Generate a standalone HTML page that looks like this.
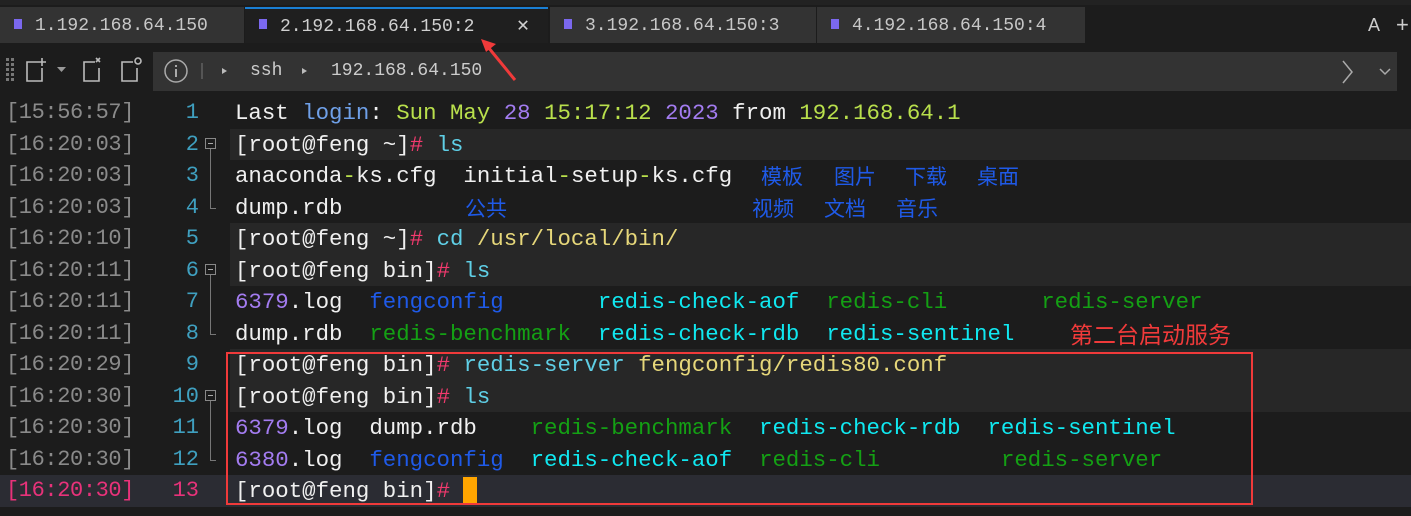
<!DOCTYPE html>
<html><head><meta charset="utf-8"><style>
*{margin:0;padding:0;box-sizing:border-box}
body{width:1411px;height:516px;background:#1c1c1c;overflow:hidden;position:relative;font-family:"Liberation Mono","Noto Sans CJK SC",monospace;}
.tab{position:absolute;top:7px;height:36px;background:#333;color:#c8c8c8;font-size:18px;line-height:39px;}
.tab .sq{position:absolute;left:14px;top:12px;width:8px;height:10px;background:#7b68ee}
.tab span.t{position:absolute;left:35px}
.row{position:absolute;left:0;width:1411px;height:31.5px}
.ts{position:absolute;left:6px;top:4px;color:#8a8a8a;font-size:22px;line-height:24px;letter-spacing:-0.4px}
.ln{position:absolute;right:1212px;top:4px;color:#3fa0c0;font-size:22px;line-height:24px}
.tx{position:absolute;left:235px;top:4px;color:#f0f0f0;font-size:22.4px;line-height:24px;white-space:pre}
.cj{position:absolute;top:4px;color:#1f5ae8;font-family:"Noto Sans CJK SC",sans-serif;font-size:21px;line-height:24px}
.W{color:#f0f0f0}.B{color:#6fa0e8}.Y{color:#b9e04c}.P{color:#a37cf0}.H{color:#f23a6e}.C{color:#5fcfe6}.Q{color:#e6d77a}.D{color:#1f5ae8}.G{color:#14a014}.K{color:#10e8f0}
.fold{position:absolute;left:205px;width:11px;height:11px;border:1px solid #888;}
.fold:after{content:"";position:absolute;left:2px;top:4px;width:5px;height:1px;background:#aaa}
.vl{position:absolute;left:210px;width:1px;background:#777}
.hl{position:absolute;left:210px;width:6px;height:1px;background:#777}
</style></head><body>
<div style="position:absolute;left:0;top:0;width:1411px;height:5px;background:#222"></div>
<div class="tab" style="left:0;width:244px"><div class="sq"></div><span class="t">1.192.168.64.150</span></div>
<div class="tab" style="left:245px;width:303px;background:#1f1f1f;border-top:2px solid #1a7fd4;color:#d0d0d0"><div class="sq" style="top:10px"></div><span class="t" style="line-height:36px">2.192.168.64.150:2</span><span style="position:absolute;left:272px;line-height:36px;font-size:20px">✕</span></div>
<div class="tab" style="left:550px;width:266px"><div class="sq"></div><span class="t">3.192.168.64.150:3</span></div>
<div class="tab" style="left:817px;width:268px"><div class="sq"></div><span class="t">4.192.168.64.150:4</span></div>
<div style="position:absolute;left:1368px;top:15px;color:#ccc;font-size:18px;font-family:'Liberation Sans',sans-serif">A</div>
<div style="position:absolute;left:1396px;top:12px;color:#ccc;font-size:22px;font-family:'Liberation Sans',sans-serif">+</div>
<svg style="position:absolute;left:0;top:50px" width="153" height="42">
<g fill="#777"><rect x="6" y="8" width="3" height="3"/><rect x="11" y="8" width="3" height="3"/><rect x="6" y="13" width="3" height="3"/><rect x="11" y="13" width="3" height="3"/><rect x="6" y="18" width="3" height="3"/><rect x="11" y="18" width="3" height="3"/><rect x="6" y="23" width="3" height="3"/><rect x="11" y="23" width="3" height="3"/><rect x="6" y="28" width="3" height="3"/><rect x="11" y="28" width="3" height="3"/></g>
<g stroke="#bbb" stroke-width="1.6" fill="none">
<path d="M38 12H27v19h15V18"/><path d="M42 8v8M38 12h8"/>
<path d="M95 12H84v19h15V18"/><path d="M96 8l4 4M100 8l-4 4"/>
<path d="M133 12h-11v19h15V18"/><circle cx="138" cy="11" r="3"/>
</g><path d="M57 17h9l-4.5 5z" fill="#999"/></svg>
<div style="position:absolute;left:153px;top:52px;width:1244px;height:39px;background:#333"></div>
<svg style="position:absolute;left:160px;top:56px" width="80" height="32"><circle cx="16" cy="15" r="11" stroke="#aaa" stroke-width="1.5" fill="none"/><rect x="15" y="13" width="2" height="8" fill="#aaa"/><rect x="15" y="9" width="2" height="2" fill="#aaa"/><rect x="41" y="7" width="2" height="16" fill="#555"/><path d="M62 12l5 3-5 3z" fill="#bbb"/></svg>
<div style="position:absolute;left:250px;top:61px;color:#ccc;font-size:18px;font-family:'Liberation Mono',monospace">ssh</div>
<svg style="position:absolute;left:300px;top:66px" width="10" height="10"><path d="M2 2l5 3-5 3z" fill="#bbb"/></svg>
<div style="position:absolute;left:331px;top:61px;color:#ccc;font-size:18px;font-family:'Liberation Mono',monospace">192.168.64.150</div>
<svg style="position:absolute;left:1335px;top:58px" width="60" height="28"><path d="M8 3l9 11-9 11" stroke="#aaa" stroke-width="1.5" fill="none"/><path d="M45 11l5 5 5-5" stroke="#aaa" stroke-width="1.5" fill="none"/></svg>

<div style="position:absolute;left:230px;top:128.5px;width:1181px;height:31.5px;background:#272727"></div>
<div style="position:absolute;left:230px;top:223px;width:1181px;height:63px;background:#272727"></div>
<div style="position:absolute;left:230px;top:349px;width:1181px;height:63px;background:#272727"></div>
<div style="position:absolute;left:0;top:475px;width:1411px;height:31.5px;background:#2b2c33"></div>

<div class="row" style="top:97px"><div class="ts">[15:56:57]</div><div class="ln">1</div><div class="tx">Last <span class="B">login</span>: <span class="Y">Sun May</span> <span class="P">28</span> <span class="Y">15:17:12</span> <span class="P">2023</span> from <span class="Y">192.168.64.1</span></div></div>
<div class="row" style="top:128.5px"><div class="ts">[16:20:03]</div><div class="ln">2</div><div class="tx">[root@feng ~]<span class="H">#</span> <span class="C">ls</span></div></div>
<div class="row" style="top:160px"><div class="ts">[16:20:03]</div><div class="ln">3</div><div class="tx">anaconda<span class="Y">-</span>ks.cfg  initial<span class="Y">-</span>setup<span class="Y">-</span>ks.cfg</div><div class="cj" style="left:761px">模板</div><div class="cj" style="left:834px">图片</div><div class="cj" style="left:905px">下载</div><div class="cj" style="left:977px">桌面</div></div>
<div class="row" style="top:191.5px"><div class="ts">[16:20:03]</div><div class="ln">4</div><div class="tx">dump.rdb</div><div class="cj" style="left:465px">公共</div><div class="cj" style="left:752px">视频</div><div class="cj" style="left:824px">文档</div><div class="cj" style="left:896px">音乐</div></div>
<div class="row" style="top:223px"><div class="ts">[16:20:10]</div><div class="ln">5</div><div class="tx">[root@feng ~]<span class="H">#</span> <span class="C">cd</span> <span class="Q">/usr/local/bin/</span></div></div>
<div class="row" style="top:254.5px"><div class="ts">[16:20:11]</div><div class="ln">6</div><div class="tx">[root@feng bin]<span class="H">#</span> <span class="C">ls</span></div></div>
<div class="row" style="top:286px"><div class="ts">[16:20:11]</div><div class="ln">7</div><div class="tx"><span class="P">6379</span>.log  <span class="D">fengconfig</span>       <span class="K">redis-check-aof</span>  <span class="G">redis-cli</span>       <span class="G">redis-server</span></div></div>
<div class="row" style="top:317.5px"><div class="ts">[16:20:11]</div><div class="ln">8</div><div class="tx">dump.rdb  <span class="G">redis-benchmark</span>  <span class="K">redis-check-rdb</span>  <span class="K">redis-sentinel</span></div><div style="position:absolute;left:1070px;top:-2px;color:#f03a3a;font-family:'Noto Sans CJK SC',sans-serif;font-size:23px">第二台启动服务</div></div>
<div class="row" style="top:349px"><div class="ts">[16:20:29]</div><div class="ln">9</div><div class="tx">[root@feng bin]<span class="H">#</span> <span class="C">redis-server</span> <span class="Q">fengconfig/redis80.conf</span></div></div>
<div class="row" style="top:380.5px"><div class="ts">[16:20:30]</div><div class="ln">10</div><div class="tx">[root@feng bin]<span class="H">#</span> <span class="C">ls</span></div></div>
<div class="row" style="top:412px"><div class="ts">[16:20:30]</div><div class="ln">11</div><div class="tx"><span class="P">6379</span>.log  dump.rdb    <span class="G">redis-benchmark</span>  <span class="K">redis-check-rdb</span>  <span class="K">redis-sentinel</span></div></div>
<div class="row" style="top:443.5px"><div class="ts">[16:20:30]</div><div class="ln">12</div><div class="tx"><span class="P">6380</span>.log  <span class="D">fengconfig</span>  <span class="K">redis-check-aof</span>  <span class="G">redis-cli</span>         <span class="G">redis-server</span></div></div>
<div class="row" style="top:475px"><div class="ts" style="color:#e8327a">[16:20:30]</div><div class="ln" style="color:#e8327a">13</div><div class="tx">[root@feng bin]<span class="H">#</span> </div><div style="position:absolute;left:463px;top:2px;width:14px;height:28px;background:#ffa500"></div></div>

<div class="fold" style="top:138px"></div><div class="vl" style="top:149px;height:59px"></div><div class="hl" style="top:208px"></div>
<div class="fold" style="top:264px"></div><div class="vl" style="top:275px;height:59px"></div><div class="hl" style="top:334px"></div>
<div class="fold" style="top:390px"></div><div class="vl" style="top:401px;height:59px"></div><div class="hl" style="top:460px"></div>

<div style="position:absolute;left:226px;top:352px;width:1027px;height:153px;border:2px solid #f03a3a"></div>
<svg style="position:absolute;left:470px;top:30px" width="60" height="60"><path d="M45 50L18 17" stroke="#f03a3a" stroke-width="3"/><path d="M11 9l15 5-10 8z" fill="#f03a3a"/></svg>
</body></html>
